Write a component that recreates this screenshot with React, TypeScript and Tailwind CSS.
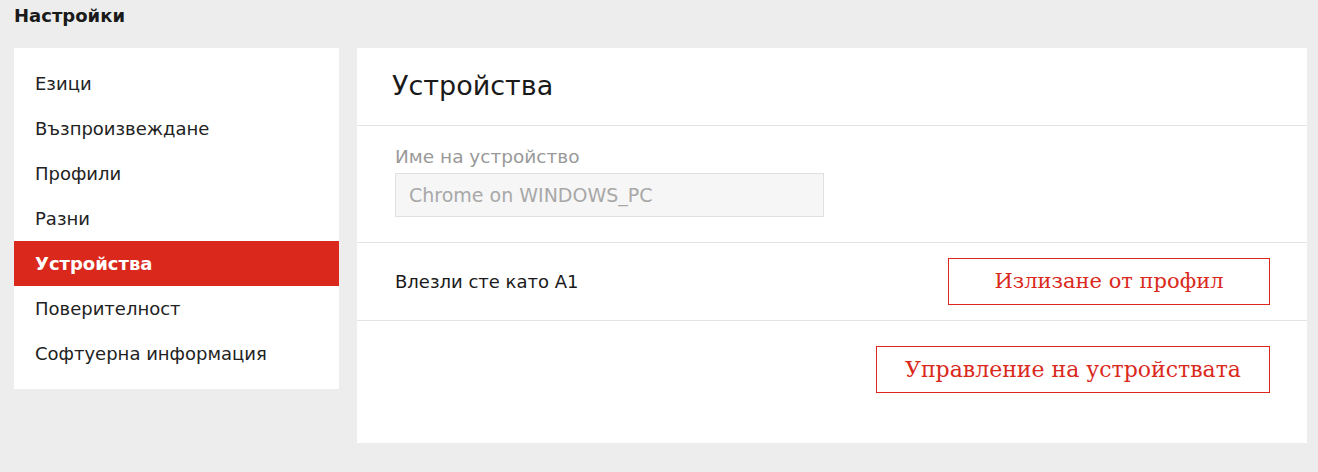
const items = [
  'Езици',
  'Възпроизвеждане',
  'Профили',
  'Разни',
  'Устройства',
  'Поверителност',
  'Софтуерна информация',
];

const sans = { fontFamily: '"DejaVu Sans", "Noto Sans", sans-serif' };
const serif = { fontFamily: '"DejaVu Serif", "Liberation Serif", serif' };

export default function App() {
  return (
    <div className="min-h-[472px] bg-[#ededed] pl-[14px] pr-[11px] pt-[5px] text-[#1a1a1a]" style={sans}>
      <h1 className="h-[43px] text-[18px] font-bold leading-[22px]">Настройки</h1>
      <div className="flex items-start gap-[18px]">
        <nav className="w-[325px] shrink-0 bg-white py-[13px]">
          {items.map((item) => (
            <div
              key={item}
              className={
                item === 'Устройства'
                  ? 'flex h-[45px] items-center bg-[#da291c] px-[21px] text-[18px] font-bold text-white'
                  : 'flex h-[45px] items-center px-[21px] text-[18px] text-[#222]'
              }
            >
              {item}
            </div>
          ))}
        </nav>
        <main className="w-[950px] shrink-0 bg-white pb-[50px]">
          <div className="flex h-[78px] items-center border-b border-[#e3e3e3] px-[35px]">
            <h2 className="text-[27px]">Устройства</h2>
          </div>
          <div className="border-b border-[#e3e3e3] px-[38px] pt-[19px] pb-[25px]">
            <div className="text-[18.5px] leading-[24px] text-[#999]">Име на устройство</div>
            <div className="mt-[4px] flex h-[44px] w-[429px] items-center border border-[#e0e0e0] bg-[#f6f6f6] px-[13px] text-[19px] text-[#a8a8a8]">
              Chrome on WINDOWS_PC
            </div>
          </div>
          <div className="flex h-[78px] items-center justify-between border-b border-[#e3e3e3] pl-[38px] pr-[37px]">
            <span className="text-[18px]">Влезли сте като А1</span>
            <button className="h-[47px] w-[322px] border border-[#da291c] text-[21px] text-[#da291c]" style={serif}>
              Излизане от профил
            </button>
          </div>
          <div className="flex justify-end pt-[25px] pr-[37px]">
            <button className="h-[47px] w-[394px] border border-[#da291c] text-[22px] text-[#da291c]" style={serif}>
              Управление на устройствата
            </button>
          </div>
        </main>
      </div>
    </div>
  );
}
